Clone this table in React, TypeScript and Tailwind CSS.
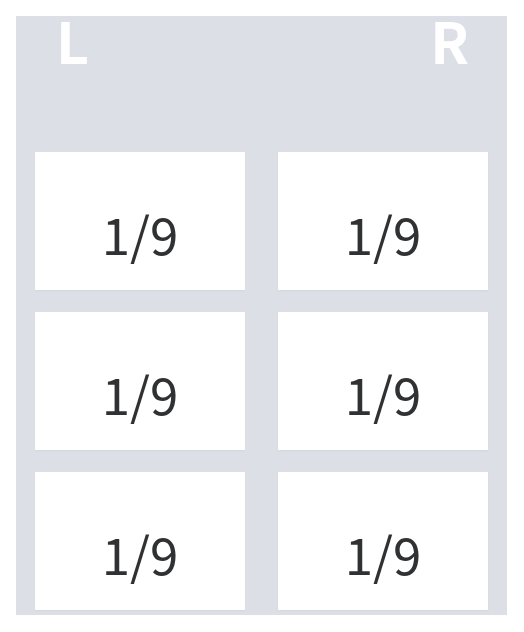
const cells = ["1/9", "1/9", "1/9", "1/9", "1/9", "1/9"];

export default function App() {
  return (
    <div
      className="min-h-screen bg-white p-4"
      style={{ fontFamily: '"Noto Sans CJK SC", "Noto Sans", sans-serif' }}
    >
      <div className="w-[491px] bg-[#dcdfe6] pb-[5px]">
        {/* Header */}
        <div className="flex h-[136px] items-start justify-between pl-[40px] pr-[38px]">
          <span className="-mt-[5px] text-[57px] font-bold leading-none text-white">L</span>
          <span className="-mt-[5px] text-[57px] font-bold leading-none text-white">R</span>
        </div>

        {/* Grid */}
        <div className="grid grid-cols-2 gap-x-[33px] gap-y-[22px] px-[19px]">
          {cells.map((c, i) => (
            <div
              key={i}
              className="flex h-[138px] items-center justify-center bg-white pt-[24px] text-[51px] leading-none text-[#303133] shadow-[0_1px_2px_rgba(0,0,0,0.04)]"
            >
              {c}
            </div>
          ))}
        </div>
      </div>
    </div>
  );
}
